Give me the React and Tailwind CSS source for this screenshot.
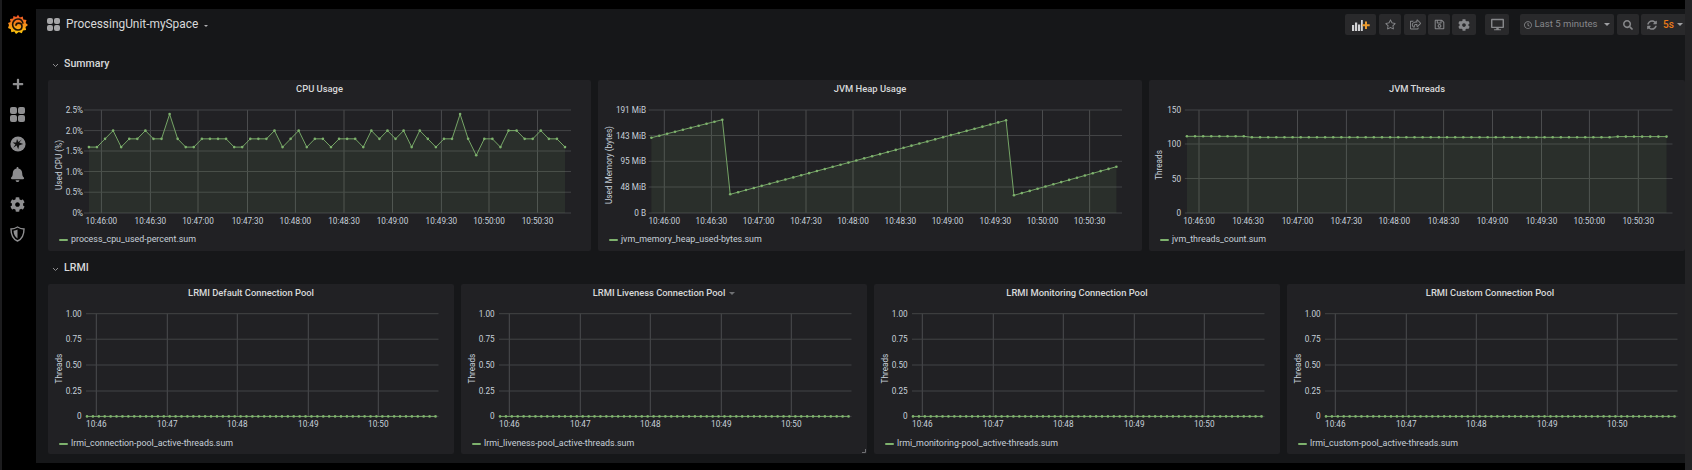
import { FaBell, FaCog, FaDesktop, FaPlus, FaRegClock, FaRegSave, FaRegShareSquare, FaRegStar, FaSearch, FaSyncAlt } from "react-icons/fa";

const GREEN = "#7EB26D";

const CPU_VALUES = [
  1.6, 1.6, 1.8, 2.0, 1.6, 1.8, 1.8, 2.0, 1.8, 1.8, 2.4, 1.8, 1.6, 1.6, 1.8, 1.8, 1.8, 1.8, 1.6, 1.6,
  1.8, 1.8, 1.8, 2.0, 1.6, 1.8, 2.0, 1.6, 1.8, 1.8, 1.6, 1.8, 1.8, 1.8, 1.6, 2.0, 1.8, 2.0, 1.8, 2.0,
  1.6, 2.0, 1.8, 1.6, 1.8, 1.8, 2.4, 1.8, 1.4, 1.8, 1.8, 1.6, 2.0, 2.0, 1.8, 1.8, 2.0, 1.8, 1.8, 1.6,
];

const spread = (from, to, count) => Array.from({ length: count }, (_, i) => from + ((to - from) * i) / (count - 1));

const TIMES_30S = ["10:46:00", "10:46:30", "10:47:00", "10:47:30", "10:48:00", "10:48:30", "10:49:00", "10:49:30", "10:50:00", "10:50:30"];
const TIMES_1M = ["10:46", "10:47", "10:48", "10:49", "10:50"];

const cpuChart = {
  title: "CPU Usage",
  legend: "process_cpu_used-percent.sum",
  yLabel: "Used CPU (%)",
  width: 543,
  labelX: 10.5,
  tickX: 35,
  gridX: [36, 523],
  vlines: [53.4, 102.4, 150, 199.5, 247.4, 296, 344.5, 393.4, 441, 489.5],
  times: TIMES_30S,
  ticks: [[30, "2.5%"], [50.6, "2.0%"], [71, "1.5%"], [91.5, "1.0%"], [112.2, "0.5%"], [133, "0%"]],
  xs: spread(40.9, 517, 60),
  ys: CPU_VALUES.map((v) => 133 - 41.2 * v),
};

const heapChart = {
  title: "JVM Heap Usage",
  legend: "jvm_memory_heap_used-bytes.sum",
  yLabel: "Used Memory (bytes)",
  width: 544,
  labelX: 11,
  tickX: 48,
  gridX: [50.6, 524],
  vlines: [66.3, 113.4, 160.6, 208, 255, 302.4, 349.5, 397.4, 444.5, 491.6],
  times: TIMES_30S,
  ticks: [[30, "191 MiB"], [55.5, "143 MiB"], [81.3, "95 MiB"], [107, "48 MiB"], [133, "0 B"]],
  xs: spread(53.4, 518.4, 60),
  ys: [...spread(57.7, 39.7, 10), ...spread(114.3, 40.3, 36), ...spread(115.3, 86.7, 14)],
};

const threadsChart = {
  title: "JVM Threads",
  legend: "jvm_threads_count.sum",
  yLabel: "Threads",
  width: 536,
  labelX: 10,
  tickX: 32,
  gridX: [35.8, 523.5],
  vlines: [50, 99, 148.5, 197.4, 245.3, 294.6, 343.5, 392.5, 440.4, 489.3],
  times: TIMES_30S,
  ticks: [[30, "150"], [64, "100"], [98.5, "50"], [133, "0"]],
  xs: spread(37.9, 517.5, 60),
  ys: Array.from({ length: 60 }, (_, i) => (i < 8 ? 56.3 : i < 53 ? 57.3 : 56.6)),
};

const lrmiChart = (title, legend, caret, corner) => ({
  title,
  legend,
  caret,
  corner,
  yLabel: "Threads",
  width: 406,
  labelX: 10.5,
  tickX: 33.7,
  gridX: [38, 390.5],
  vlines: [48.3, 119.3, 189.3, 260.3, 330.3],
  times: TIMES_1M,
  ticks: [[29.7, "1.00"], [55.2, "0.75"], [81, "0.50"], [107, "0.25"], [132.4, "0"]],
  xs: spread(39, 387.5, 60),
  ys: Array(60).fill(132.4),
});

function Chart({ chart, titleHeight }) {
  const { width, xs, ys, gridX, vlines, ticks, times, tickX, labelX, yLabel } = chart;
  const bottom = ticks[ticks.length - 1][0];
  const line = xs.map((x, i) => `${x},${ys[i]}`).join(" ");
  const area = `${xs[0]},${bottom} ${line} ${xs[xs.length - 1]},${bottom}`;
  const midY = (ticks[0][0] + bottom) / 2 + 3.5;

  return (
    <svg width={width} height={131} viewBox={`0 ${titleHeight} ${width} 131`} className="block shrink-0">
      {vlines.map((x) => (
        <line key={x} x1={x} x2={x} y1={ticks[0][0]} y2={bottom} stroke="#505153" strokeWidth="0.9" />
      ))}
      {ticks.map(([y]) => (
        <line key={y} x1={gridX[0]} x2={gridX[1]} y1={y} y2={y} stroke="#434446" strokeWidth="1" />
      ))}
      <polygon points={area} fill={GREEN} fillOpacity="0.1" />
      <polyline points={line} fill="none" stroke={GREEN} strokeWidth="0.9" />
      {xs.map((x, i) => (
        <circle key={x} cx={x} cy={ys[i]} r="1.3" fill={GREEN} />
      ))}
      {ticks.map(([y, label]) => (
        <text key={label} x={tickX} y={y + 3} textAnchor="end" className="fill-[#c7d0d9] text-[8.2px]">
          {label}
        </text>
      ))}
      {times.map((label, i) => (
        <text key={label} x={vlines[i]} y={bottom + 11} textAnchor="middle" className="fill-[#c7d0d9] text-[8.2px]">
          {label}
        </text>
      ))}
      <text
        textAnchor="middle"
        transform={`translate(${labelX + 3} ${midY}) rotate(-90)`}
        className="fill-[#c7d0d9] text-[8.2px]"
      >
        {yLabel}
      </text>
    </svg>
  );
}

function Panel({ chart, titleHeight, heightClass, legendClass }) {
  return (
    <div
      className={`relative shrink-0 rounded-[2px] bg-[#212124] ${heightClass}`}
      style={{ width: chart.width }}
    >
      <div
        className="flex items-center justify-center gap-1 text-[9.4px] font-medium text-[#d8d9da]"
        style={{ height: titleHeight }}
      >
        {chart.title}
        {chart.caret && <span className="h-0 w-0 border-x-[3px] border-t-[3px] border-x-transparent border-t-[#6f7073]" />}
      </div>
      <Chart chart={chart} titleHeight={titleHeight} />
      <div className={`flex items-center gap-[3px] pl-[11px] text-[8.9px] text-[#c7d0d9] ${legendClass}`}>
        <span className="h-[2px] w-[9px] rounded-full bg-[#7EB26D]" />
        {chart.legend}
      </div>
      {chart.corner && (
        <svg width="4" height="4" viewBox="0 0 4 4" className="absolute right-[1px] bottom-[1px]">
          <path d="M0 3.500h3.500V0" fill="none" stroke="#6f7073" strokeWidth="1" />
        </svg>
      )}
    </div>
  );
}

function SectionRow({ title }) {
  return (
    <div className="flex h-5 items-center pl-[16px] text-[10.6px] font-medium text-[#d8d9da]">
      <svg width="7" height="5" viewBox="0 0 7 5" className="mr-[5px] mt-[3px]">
        <path d="M1 1l2.500 2.500L6 1" fill="none" stroke="#8e8e90" strokeWidth="1" />
      </svg>
      {title}
    </div>
  );
}

function ToolButton({ className = "", children }) {
  return (
    <div className={`flex h-[21px] items-center justify-center rounded-[2px] bg-[#29292b] text-[#86878a] ${className}`}>
      {children}
    </div>
  );
}

function GridIcon({ size, className = "" }) {
  return (
    <div className={`grid grid-cols-2 gap-[1px] ${className}`} style={{ width: size, height: size }}>
      <span className="rounded-[2px] bg-current" />
      <span className="rounded-[2px] bg-current" />
      <span className="rounded-[2px] bg-current" />
      <span className="rounded-[2px] bg-current" />
    </div>
  );
}

function GrafanaLogo() {
  return (
    <svg width="20" height="21" viewBox="0 0 20 21">
      <defs>
        <linearGradient id="grafana" x1="0" y1="0" x2="0" y2="1">
          <stop offset="0" stopColor="#ef4e27" />
          <stop offset="1" stopColor="#fbca0a" />
        </linearGradient>
      </defs>
      <path
        d="M10 .8l1.800 2.600 3-1 .5 3.100 3.200.4-.8 3 2.300 2.100-2.500 2 .6 3-3.100.4-1.200 2.900-3-1.200L8 20l-1.700-2.600-3 .9-.4-3.100L0 14l1-3L0 9l2.600-1-.6-3 3.100-.5L5.400 2l2.900 1.100z"
        fill="url(#grafana)"
      />
      <path
        d="M15 9.600C14.500 6.700 12.400 5 10 5c-3 0-5.400 2.500-5.400 5.500S7 16 10 16c2.400 0 4-1.700 4-3.700 0-1.800-1.400-3.200-3.300-3.200-1.600 0-2.800 1.200-2.800 2.600"
        fill="none"
        stroke="#1a1208"
        strokeWidth="1.6"
      />
    </svg>
  );
}

function CompassIcon() {
  return (
    <svg width="16" height="16" viewBox="0 0 16 16">
      <circle cx="8" cy="8" r="7.600" fill="currentColor" />
      <path d="M12 3.200L9.300 6.400 13.200 8 9.300 9.300 8.200 13.200 6.600 9.500 3.200 11.800 5.400 8.600 2.600 6.600 6.200 6.600 7 2.900l1.500 3.200z" fill="#111" />
    </svg>
  );
}

function ShieldIcon() {
  return (
    <svg width="15" height="16" viewBox="0 0 15 16">
      <path d="M7.500 1C5 2.600 3 3 1 3c0 5 1.500 10 6.500 12 5-2 6.500-7 6.500-12-2 0-4-.4-6.500-2z" fill="none" stroke="currentColor" strokeWidth="1.400" />
      <path d="M7.500 3.500C6.300 4.200 5 4.600 3.500 4.800c.2 3.400 1.400 6.200 4 7.700z" fill="currentColor" />
    </svg>
  );
}

function AddPanelIcon() {
  return (
    <svg width="18" height="12" viewBox="0 0 18 12">
      <path d="M0 6h2.200v6H0zM3 3.500h2.200V12H3zM6 5.500h2.200V12H6zM9 1h1.800v11H9z" fill="#d2d2d4" />
      <path d="M13 2.500h2v2.700h2.700v2H15v2.700h-2V7.200h-2.700v-2H13z" fill="#eb9a2e" />
    </svg>
  );
}

function Sidebar() {
  return (
    <div className="flex w-[34px] shrink-0 flex-col items-center bg-black pr-[3px] text-[#8e8e90]">
      <div className="flex h-[48px] items-center justify-center">
        <GrafanaLogo />
      </div>
      <div className="mt-[21px] flex h-[30px] items-center"><FaPlus size={12} /></div>
      <div className="flex h-[30px] items-center"><GridIcon size={15} /></div>
      <div className="flex h-[30px] items-center"><CompassIcon /></div>
      <div className="flex h-[30px] items-center"><FaBell size={15} /></div>
      <div className="flex h-[30px] items-center"><FaCog size={15} /></div>
      <div className="flex h-[30px] items-center"><ShieldIcon /></div>
    </div>
  );
}

function Toolbar() {
  return (
    <div className="flex h-[21px] items-center">
      <GridIcon size={13} className="ml-[11px] text-[#a6a6a8]" />
      <span className="ml-[6px] text-[11.9px] text-[#d8d9da]">ProcessingUnit-mySpace</span>
      <span className="ml-[6px] mt-[3px] h-0 w-0 border-x-[2px] border-t-[2px] border-x-transparent border-t-[#b0b0b2]" />

      <div className="ml-auto flex">
        <ToolButton className="w-[31px]"><AddPanelIcon /></ToolButton>
        <ToolButton className="ml-[3px] w-[22px]"><FaRegStar size={11} /></ToolButton>
        <ToolButton className="ml-[3px] w-[22px]"><FaRegShareSquare size={11} /></ToolButton>
        <ToolButton className="ml-[2px] w-[22px]"><FaRegSave size={11} /></ToolButton>
        <ToolButton className="ml-[2px] w-[24px]"><FaCog size={12} /></ToolButton>
        <ToolButton className="ml-[9px] w-[24px]"><FaDesktop size={13} /></ToolButton>
        <ToolButton className="ml-[11px] w-[94px] gap-[2px] text-[9.6px] text-[#9fa0a3]">
          <FaRegClock size={8} />
          <span>Last 5 minutes</span>
          <span className="ml-[4px] h-0 w-0 border-x-[3px] border-t-[3px] border-x-transparent border-t-[#9fa0a3]" />
        </ToolButton>
        <ToolButton className="ml-[3px] w-[22px]"><FaSearch size={10} /></ToolButton>
        <ToolButton className="ml-[2px] w-[44px] rounded-r-none">
          <span className="flex w-[22px] justify-center"><FaSyncAlt size={10} /></span>
          <span className="flex w-[22px] items-center gap-[3px] text-[10px] font-medium text-[#eb7b18]">
            5s
            <span className="h-0 w-0 border-x-[3px] border-t-[3px] border-x-transparent border-t-[#9fa0a3]" />
          </span>
        </ToolButton>
      </div>
    </div>
  );
}

export default function App() {
  return (
    <div className="flex h-[470px] w-[1692px] overflow-hidden bg-black font-['Roboto',sans-serif]">
      <div className="w-[2px] shrink-0 bg-[#1c1c1e]" />
      <Sidebar />
      <div className="mt-[9px] h-[454px] flex-1 overflow-hidden bg-[#161719] pt-[5px]">
        <Toolbar />
        <div className="mt-[19px]">
          <SectionRow title="Summary" />
        </div>
        <div className="mt-[6px] flex gap-[7px] pl-[12px]">
          <Panel chart={cpuChart} titleHeight={19} heightClass="h-[171px]" legendClass="h-[20px]" />
          <Panel chart={heapChart} titleHeight={19} heightClass="h-[171px]" legendClass="h-[20px]" />
          <Panel chart={threadsChart} titleHeight={19} heightClass="h-[171px]" legendClass="h-[20px]" />
        </div>
        <div className="mt-[7px]">
          <SectionRow title="LRMI" />
        </div>
        <div className="mt-[6px] flex gap-[7px] pl-[12px]">
          <Panel chart={lrmiChart("LRMI Default Connection Pool", "lrmi_connection-pool_active-threads.sum")} titleHeight={18} heightClass="h-[170px]" legendClass="h-[21px]" />
          <Panel chart={lrmiChart("LRMI Liveness Connection Pool", "lrmi_liveness-pool_active-threads.sum", true, true)} titleHeight={18} heightClass="h-[170px]" legendClass="h-[21px]" />
          <Panel chart={lrmiChart("LRMI Monitoring Connection Pool", "lrmi_monitoring-pool_active-threads.sum")} titleHeight={18} heightClass="h-[170px]" legendClass="h-[21px]" />
          <Panel chart={lrmiChart("LRMI Custom Connection Pool", "lrmi_custom-pool_active-threads.sum")} titleHeight={18} heightClass="h-[170px]" legendClass="h-[21px]" />
        </div>
      </div>
      <div className="w-[7px] shrink-0 bg-[#232325]" />
    </div>
  );
}
